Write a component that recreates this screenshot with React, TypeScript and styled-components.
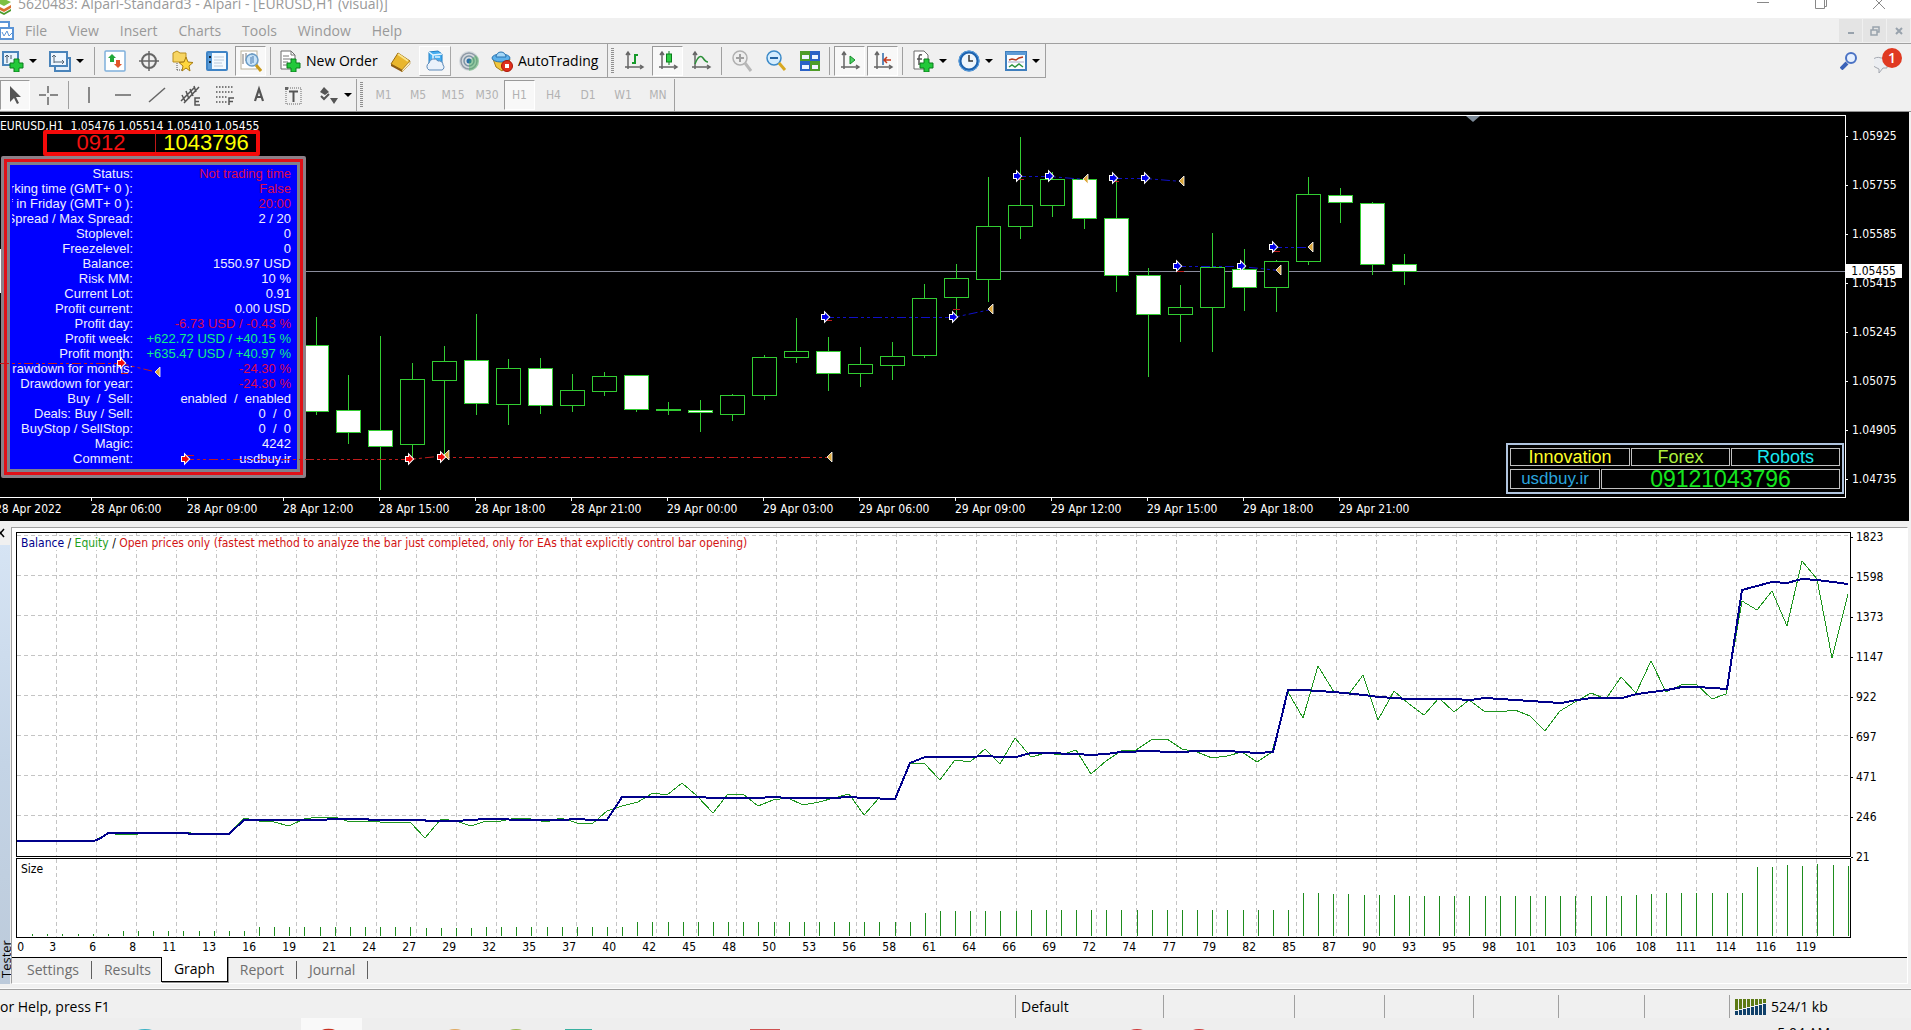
import React from "react";
import styled, { createGlobalStyle, css } from "styled-components";

const UI = `"Open Sans", "Noto Sans", sans-serif`;
const SMALL = `"DejaVu Sans Condensed", "Noto Sans", sans-serif`;
const ARIAL = `"Liberation Sans", Arial, sans-serif`;

const Global = createGlobalStyle`
  *, *::before, *::after { box-sizing: border-box; }
  body { margin: 0; background: #f0f0f0; font: 14px/20px ${UI}; color: #000; overflow: hidden; }
  button { font: inherit; color: inherit; background: none; border: 0; padding: 0; margin: 0; }
  h1, dl, dd, dt, p { margin: 0; font-weight: 400; font-size: inherit; }
  svg { display: block; flex: none; }
`;

const Window = styled.div`
  display: flex;
  flex-direction: column;
  height: 100vh;
  overflow: hidden;
  white-space: nowrap;
`;

/* ---------- title and menu ---------- */

const TitleBar = styled.header`
  display: flex;
  justify-content: space-between;
  flex: none;
  height: 18px;
  background: #fff;
  color: #999;
  overflow: hidden;
`;
const TitleText = styled.div`
  display: flex;
  align-items: center;
  gap: 4px;
  height: 8px;
`;
const WindowButtons = styled.div`
  display: flex;
  gap: 28px;
  padding-right: 17px;
  button { width: 30px; height: 12px; display: flex; justify-content: center; }
`;
const MenuBar = styled.nav`
  display: flex;
  align-items: center;
  gap: 1px;
  flex: none;
  height: 26px;
  border-bottom: 1px solid #a0a0a0;
  color: #999;
`;
const MenuItem = styled.button`
  padding: 0 10px;
  height: 24px;
`;
const MdiButtons = styled.div`
  display: flex;
  gap: 1px;
  margin-left: auto;
  padding-right: 1px;
  button {
    width: 23px; height: 23px; background: #e4e4e4;
    display: flex; align-items: center; justify-content: center;
  }
`;

/* ---------- toolbars ---------- */

const ToolRow = styled.div<{ $last?: boolean }>`
  display: flex;
  flex: none;
  height: 34px;
  ${(p) => p.$last && css`padding-top: 1px; border-bottom: 1px solid #909090;`}
`;
const ToolGroup = styled.div<{ $line?: boolean }>`
  display: flex;
  align-items: center;
  gap: 2px;
  border-right: 1px solid #a0a0a0;
  ${(p) => p.$line && css`border-bottom: 1px solid #a0a0a0;`}
`;
const ToolButton = styled.button<{ $w: number; $on?: boolean; $raised?: boolean; $start?: number }>`
  display: flex;
  align-items: center;
  justify-content: ${(p) => (p.$start === undefined ? "center" : "flex-start")};
  padding-left: ${(p) => p.$start || 0}px;
  gap: 5px;
  width: ${(p) => p.$w}px;
  height: 30px;
  ${(p) => p.$on && css`
    background: #f8f8f8;
    border: 1px solid #fff;
    border-top-color: #9a9a9a;
    border-left-color: #9a9a9a;
  `}
  ${(p) => p.$raised && css`
    background: #f6f6f6;
    border: 1px solid #fff;
    border-bottom-color: #a8a8a8;
    border-right-color: #a8a8a8;
  `}
`;
const Separator = styled.span`
  width: 1px;
  height: 28px;
  margin: 0 2px;
  background: #a0a0a0;
`;
const Grip = styled.span`
  width: 3px;
  height: 26px;
  margin: 0 2px 0 3px;
  background: repeating-linear-gradient(#909090 0 1px, #f0f0f0 1px 2px);
`;
const Period = styled(ToolButton)`
  font: 12px/16px ${SMALL};
  color: #b2b2b2;
`;
const Caret = styled.span`
  border: 4px solid transparent;
  border-top-color: #000;
  border-bottom: 0;
`;
const Notices = styled.div`
  display: flex;
  align-items: center;
  gap: 16px;
  margin-left: auto;
  padding-right: 9px;
  button { height: 30px; }
`;

/* ---------- price chart ---------- */

const ChartArea = styled.main`
  display: grid;
  grid-template-columns: 1fr 63px;
  grid-template-rows: 383px 23px;
  flex: none;
  position: relative;
  padding-top: 3px;
  margin-right: 2px;
  background: #000;
  color: #fff;
  font: 12px/18px ${SMALL};
  overflow: hidden;
`;
const Plot = styled.section`
  position: relative;
  border: 1px solid #fff;
  border-left: 0;
`;
const Layer = styled.svg`
  position: absolute;
  inset: 0;
  width: 100%;
  height: 100%;
  pointer-events: none;
`;
const Quote = styled.p`
  position: relative;
  padding-top: 1px;
  white-space: pre;
`;
const PriceScale = styled.aside`
  display: flex;
  flex-direction: column;
  gap: 31px;
  padding-top: 12px;
  span { display: flex; align-items: center; gap: 4px; }
  span::before { content: ""; width: 2px; height: 1px; background: #fff; }
`;
const CurrentPrice = styled.output`
  position: absolute;
  top: 152px;
  right: 7px;
  padding: 0 6px;
  line-height: 14px;
  background: #fff;
  color: #000;
`;
const TimeScale = styled.div`
  display: flex;
  margin-left: -5px;
  line-height: 16px;
  span { flex: none; width: 96px; }
  span::before { content: ""; display: block; width: 1px; height: 3px; background: #fff; }
`;
const PhoneBox = styled.div`
  position: absolute;
  left: 43px;
  top: 14px;
  display: flex;
  width: 217px;
  height: 26px;
  border: 4px solid #f40a0a;
  border-radius: 2px;
  font: 22px/18px ${ARIAL};
  text-align: center;
  color: #ffff00;
  span { flex: 1; }
  span:first-child { flex: none; width: 109px; color: #f01010; border-right: 1px solid #c01818; }
`;
const InfoFrame = styled.div`
  position: absolute;
  left: 1px;
  top: 40px;
  width: 305px;
  border: 3px solid #8c8088;
  border-radius: 2px;
`;
const InfoRing = styled.div`
  border: 3px solid #e01018;
`;
const InfoList = styled.dl`
  display: grid;
  grid-template-columns: 121px 1fr;
  padding: 1px 6px 3px 2px;
  border: 3px solid #80808c;
  background: #0000ff;
  color: #f0f0ff;
  font: 13px/15px ${ARIAL};
  white-space: pre;
`;
const InfoLabel = styled.dt`
  display: flex;
  justify-content: flex-end;
  overflow: hidden;
`;
const InfoValue = styled.dd<{ $c?: string }>`
  text-align: right;
  color: ${(p) => p.$c || "inherit"};
`;
const AdBox = styled.div`
  position: absolute;
  right: 1px;
  bottom: 3px;
  display: grid;
  gap: 3px;
  width: 338px;
  padding: 3px 2px;
  border: 2px solid #b0c4de;
  background: #000;
  font: 18px/16px ${ARIAL};
  text-align: center;
  div { display: flex; gap: 1px; }
`;
const AdCell = styled.span<{ $w?: number; $c: string; $size?: number; $h?: number }>`
  ${(p) => (p.$w ? css`flex: none; width: ${p.$w}px;` : css`flex: 1;`)}
  border: 1px solid #c0c0c0;
  color: ${(p) => p.$c};
  font-size: ${(p) => p.$size || 18}px;
  line-height: ${(p) => p.$h || 16}px;
`;

/* ---------- strategy tester ---------- */

const Tester = styled.section`
  display: flex;
  flex: none;
  height: 468px;
  border-bottom: 1px solid #fbfbfb;
`;
const Side = styled.div`
  display: flex;
  flex-direction: column;
  width: 11px;
  padding-bottom: 4px;
  overflow: hidden;
  button { height: 24px; text-align: left; display: flex; align-items: center; }
`;
const SideTitle = styled.h2`
  margin: 0;
  flex: 1;
  width: 10px;
  display: flex;
  align-items: center;
  padding: 6px 1px 0 0;
  background: linear-gradient(#bccada, #c4d4e6 50%, #d6e4f4);
  font: 13px/12px ${UI};
  writing-mode: vertical-rl;
  transform: rotate(180deg);
`;
const TesterBody = styled.div`
  display: flex;
  flex-direction: column;
  flex: 1;
  min-width: 0;
  margin: 6px 3px 4px 0;
  border: 1px solid #fff;
  border-top-color: #a0a0a0;
  border-left-color: #a0a0a0;
`;
const Graph = styled.div`
  display: grid;
  grid-template-columns: 1fr 56px;
  grid-template-rows: 325px 80px 19px;
  row-gap: 1px;
  padding: 4px 0 0 4px;
  height: 429px;
  flex: none;
  background: #fff;
  font: 12px/16px ${SMALL};
`;
const Frame = styled.div`
  position: relative;
  border: 1px solid #000;
`;
const Legend = styled.p`
  position: relative;
  padding: 2px 4px;
  color: #000;
  span { background: #fff; }
`;
const Tint = styled.span<{ $c: string }>`
  color: ${(p) => p.$c};
`;
const ValueScale = styled.div`
  display: flex;
  flex-direction: column;
  gap: 24px;
  margin: -3px 0 -5px;
  span { display: flex; align-items: center; gap: 3px; }
  span::before { content: ""; width: 2px; height: 1px; background: #000; }
`;
const TradeScale = styled.div`
  display: flex;
  text-align: right;
  line-height: 17px;
  span { flex: none; width: 40px; }
  span:first-child { width: 8px; }
  span:nth-child(2) { width: 32px; }
`;
const Tabs = styled.div`
  display: flex;
  align-items: center;
  height: 25px;
  border-top: 1px solid #000;
  padding-left: 3px;
  color: #6e6e6e;
`;
const Tab = styled.button<{ $active?: boolean; $plain?: boolean }>`
  padding: 0 12px;
  height: 18px;
  line-height: 18px;
  border-right: 1px solid #606060;
  ${(p) => p.$plain && css`padding-right: 10px; border-right: 0;`}
  ${(p) => p.$active && css`
    height: 25px;
    margin-top: -1px;
    align-self: flex-start;
    color: #000;
    background: #fff;
    border: solid #000;
    border-width: 0 1px 1px;
    box-shadow: 1px 1px 0 #909090;
  `}
`;

/* ---------- status bar ---------- */

const StatusBar = styled.footer`
  display: flex;
  flex: none;
  height: 29px;
  padding-top: 5px;
  border-top: 1px solid #a0a0a0;
`;
const StatusCell = styled.div<{ $w?: number }>`
  display: flex;
  align-items: center;
  gap: 5px;
  ${(p) => (p.$w ? css`flex: none; width: ${p.$w}px; border-left: 1px solid #a0a0a0; padding-left: 5px;` : css`flex: 1;`)}
`;
const Taskbar = styled.div`
  display: flex;
  justify-content: space-between;
  flex: none;
  height: 12px;
  background: #eeeeee;
  overflow: hidden;
  time { padding: 5px 81px 0 0; line-height: 20px; }
`;

/* ---------- icons ---------- */

const plus = (
  <path d="M12 9h5v4h4v5h-4v4h-5v-4H8v-5h4z" fill="#22c93a" stroke="#0b7d1c" />
);
const axes = (
  <path d="M5 3v16M2 17h18M3 5l2-3 2 3M17 15l3 2-3 2" fill="none" stroke="#666" strokeWidth="1.5" />
);

const glyphs: Record<string, React.ReactNode> = {
  newChart: <><rect x="1" y="2" width="15" height="13" fill="#e8f3fd" stroke="#4a84ba" strokeWidth="2" /><path d="M5 5v8M3 7l2-2 2 2M9 5v4" stroke="#456" fill="none" />{plus}</>,
  profiles: <><rect x="6" y="8" width="15" height="13" fill="#e6f0fa" stroke="#4a84ba" strokeWidth="2" /><rect x="1" y="2" width="17" height="14" fill="#eef6fe" stroke="#4a84ba" strokeWidth="2" /><path d="M5 5v8M5 12h10M3 7l2-2 2 2M13 10l2 2-2 2" stroke="#567" fill="none" /></>,
  market: <><rect x="1" y="1" width="20" height="20" rx="1" fill="#fff" stroke="#7fb0dc" strokeWidth="1.500" /><path d="M8 4l4 4h-2v4H6V8H4z" fill="#21a83a" /><path d="M14 18l4-4h-2v-4h-4v4h-2z" fill="#e2562b" /></>,
  target: <g fill="none" stroke="#666" strokeWidth="2"><circle cx="11" cy="11" r="7" /><path d="M11 1v20M1 11h20" strokeWidth="1.5" /></g>,
  favorites: <><path d="M1 3l4-2 3 2h6v9H1z" fill="#f7d562" stroke="#b98e1e" /><path d="M5 13v8M5 20h5" stroke="#555" strokeDasharray="1 1" /><path d="M14 7l2 5 5 .500-4 3.500 1 5-4-3-4 3 1-5-4-3.500 5-.5z" fill="#ffd73d" stroke="#a87d12" /></>,
  navigator: <><rect x="1" y="2" width="20" height="18" rx="1" fill="#f4faff" stroke="#3f84c6" strokeWidth="2" /><path d="M2 3h4v16H2z" fill="#5a9cd8" /><path d="M8 7h10M8 10h10M8 13h8M8 16h9" stroke="#bccada" /><path d="M3 7h2M3 12h2" stroke="#123" strokeWidth="2" /></>,
  tester: <><rect x="1" y="1" width="16" height="18" fill="#fff" stroke="#b9b29c" /><path d="M3 4v10M6 3v8M12 3v6" stroke="#777" /><circle cx="12" cy="10" r="6" fill="#bfe0f8dd" stroke="#6b9cc6" strokeWidth="1.500" /><path d="M11 7v7M13 6v7" stroke="#4a7ab0" /><path d="M16 15l5 6" stroke="#c99a1a" strokeWidth="3" /></>,
  order: <><path d="M2 1h10l4 4v14H2z" fill="#fff" stroke="#6b6b6b" /><path d="M12 1v4h4M4 6h6M4 9h9M4 12h5M4 15h4" stroke="#777" fill="none" />{plus}</>,
  book: <><path d="M1 14L8 3l12 8-8 9z" fill="#e9b62c" stroke="#9a6c0d" /><path d="M1 14l11 6v2L1 16z" fill="#8c5a12" /><path d="M12 20l8-9v3l-8 8z" fill="#fff3c6" stroke="#a87817" strokeWidth=".5" /><path d="M8 4l10 7" stroke="#fbe48a" strokeWidth="2" /></>,
  cloud: <><path d="M5 2l9-1 4 3v9H5z" fill="#46aef0" stroke="#1f7fc6" /><path d="M5 2l4 3v8M9 5l9-1M11 7h5" stroke="#e2f4ff" fill="none" strokeWidth="1.500" /><path d="M5 20a4 4 0 010-7 5 5 0 019-2 4 4 0 015 4 3 3 0 01-1 5z" fill="#eaf2fb" stroke="#5a88b8" /></>,
  signal: <><circle cx="11" cy="11" r="10" fill="#d6dade" /><circle cx="11" cy="11" r="8" fill="none" stroke="#8f9aa6" strokeWidth="1.500" /><circle cx="11" cy="11" r="5" fill="none" stroke="#7b93a4" strokeWidth="1.500" /><circle cx="11" cy="11" r="2.500" fill="#2a6fa8" /><path d="M11 11v10a10 10 0 0010-10 8 8 0 00-3-6z" fill="#49b65a" opacity=".45" /></>,
  auto: <><path d="M2 9h17l-3 8-5 4-6-4z" fill="#f1c63c" stroke="#a87c14" /><ellipse cx="10" cy="8" rx="9" ry="4" fill="#5db1ea" stroke="#2772b0" /><path d="M5 7a5 5 0 0110 0z" fill="#a5d8f8" stroke="#2772b0" /><circle cx="16" cy="16" r="5.500" fill="#e0301e" stroke="#a81808" /><rect x="14" y="14" width="4" height="4" fill="#fff" /></>,
  bars: <>{axes}<path d="M12 4v10M12 5h3M9 13h3" stroke="#159a2a" strokeWidth="2" /></>,
  candles: <>{axes}<path d="M12 1v14" stroke="#0a7d1c" /><rect x="9.500" y="4" width="5" height="8" fill="#2fcf45" stroke="#0a7d1c" /></>,
  line: <>{axes}<path d="M5 14c3-8 6-9 8-6s3 4 5 4" fill="none" stroke="#2b9038" strokeWidth="1.500" /></>,
  zoomIn: <><circle cx="9" cy="8" r="7" fill="#eee" stroke="#b0b0b0" strokeWidth="1.500" /><path d="M5 8h8M9 4v8" stroke="#a0a0a0" strokeWidth="2" /><path d="M14 13l6 8" stroke="#b8b8b8" strokeWidth="3" /></>,
  zoomOut: <><circle cx="9" cy="8" r="7" fill="#d4edff" stroke="#3c8ac8" strokeWidth="1.500" /><path d="M5 8h8" stroke="#2465a4" strokeWidth="2" /><path d="M14 13l6 7" stroke="#d8a821" strokeWidth="3" /></>,
  tile: <><path d="M1 1h10v10H1z" fill="#4f9c28" /><path d="M11 1h10v10H11z" fill="#2b62c6" /><path d="M1 11h10v10H1z" fill="#2b62c6" /><path d="M11 11h10v10H11z" fill="#4f9c28" /><path d="M3 5h7v4H3zM13 5h6v4h-6zM3 15h7v4H3zM13 15h6v4h-6z" fill="#eef6ff" /></>,
  scroll: <>{axes}<path d="M11 6l5 4-5 4z" fill="#4fd265" stroke="#148a28" /></>,
  shift: <>{axes}<path d="M11 3v12" stroke="#2b68a8" strokeWidth="1.500" /><path d="M19 10h-7M15 7l-3 3 3 3" stroke="#c23a1e" fill="none" strokeWidth="1.500" /></>,
  indicators: <><path d="M2 1h10l4 4v14H2z" fill="#fff" stroke="#6b6b6b" /><path d="M10 5c-3-1-3 1-3 4v6M5 9h5" fill="none" stroke="#555" strokeWidth="1.500" />{plus}</>,
  clock: <><circle cx="11" cy="11" r="9" fill="#eef5fb" stroke="#1d62ae" strokeWidth="3" /><circle cx="11" cy="11" r="10" fill="none" stroke="#5aa0e0" /><path d="M11 5v6h4" fill="none" stroke="#333" strokeWidth="1.500" /></>,
  template: <><rect x="1" y="2" width="20" height="18" fill="#fbfdff" stroke="#3f7fbe" strokeWidth="2" /><path d="M1 2h20v3H1z" fill="#5d9bd6" /><path d="M4 10l3-1 4 1 3-2 4-1" stroke="#b53a1d" fill="none" strokeWidth="1.500" /><path d="M4 17l3-2 3 2 4-3 4 3" stroke="#2f9440" fill="none" strokeWidth="1.500" /><path d="M3 12h16" stroke="#aac" /></>,
  cursor: <path d="M6 2v16l4-4 3 6 2-1-3-6h5z" fill="#555" />,
  cross: <path d="M11 2v7M11 13v8M2 11h7M13 11h8" stroke="#666" strokeWidth="1.500" />,
  vline: <path d="M11 3v16" stroke="#666" strokeWidth="1.500" />,
  hline: <path d="M3 11h16" stroke="#666" strokeWidth="1.500" />,
  trend: <path d="M3 18L19 4" stroke="#666" strokeWidth="1.500" />,
  channel: <><path d="M1 17L15 3M4 19L19 3M2 11l3 6M6 7l3 8M10 5l3 7M14 2l2 6" stroke="#555" strokeWidth="1.500" fill="none" /><path d="M20 14h-5v7h5M15 17.500h4" stroke="#555" strokeWidth="1.500" fill="none" /></>,
  fibo: <><path d="M2 3h18M2 8h18M2 13h12M2 18h12" stroke="#555" strokeWidth="1.500" strokeDasharray="1.500 1.500" /><path d="M15 21v-7h5M15 17.500h4" stroke="#555" strokeWidth="1.500" fill="none" /></>,
  text: <path d="M7 17l4-12 4 12M8.500 13h5" stroke="#555" strokeWidth="2.200" fill="none" />,
  label: <><rect x="4" y="4" width="15" height="16" fill="none" stroke="#666" strokeDasharray="1 1" /><path d="M3 3h3v3H3z" fill="#666" /><path d="M7 7.500h9M11.500 7v11" stroke="#555" strokeWidth="2" /></>,
  shapes: <><path d="M7 3l5 5-4 3-5-3zM13 14h8l-4 6z" fill="#555" /><path d="M4 12l3 3 5-5" stroke="#555" strokeWidth="2" fill="none" /></>,
};

const Icon = ({ name }: { name: string }) => (
  <svg width="22" height="22" viewBox="0 0 22 22" aria-hidden="true">{glyphs[name]}</svg>
);

type Tool = { icon?: string; w?: number; on?: boolean; raised?: boolean; start?: number; caret?: boolean; text?: string };
const sep: Tool = {};

const fileTools: Tool[] = [
  { icon: "newChart", w: 46, start: 2, caret: true },
  { icon: "profiles", w: 42, start: 1, caret: true }, sep,
  { icon: "market", w: 32 }, { icon: "target", w: 32 }, { icon: "favorites", w: 32 }, { icon: "navigator", w: 32 },
  { icon: "tester", w: 31, on: true }, sep,
  { icon: "order", w: 108, start: 4, text: "New Order" },
  { icon: "book", w: 32 }, { icon: "cloud", w: 32, raised: true }, { icon: "signal", w: 32 },
  { icon: "auto", w: 120, start: 4, text: "AutoTrading" },
];
const chartTools: Tool[] = [
  { icon: "bars", w: 32 }, { icon: "candles", w: 31, on: true }, { icon: "line", w: 32 }, sep,
  { icon: "zoomIn", w: 32 }, { icon: "zoomOut", w: 32 }, { icon: "tile", w: 31 }, sep,
  { icon: "scroll", w: 31, on: true }, { icon: "shift", w: 31, on: true }, sep,
  { icon: "indicators", w: 44, start: 5, caret: true }, { icon: "clock", w: 45, start: 5, caret: true },
  { icon: "template", w: 45, start: 5, caret: true },
];
const drawTools: Tool[] = [
  { icon: "cursor", w: 30, on: true }, { icon: "cross", w: 32 }, sep,
  { icon: "vline", w: 32 }, { icon: "hline", w: 32 }, { icon: "trend", w: 32 }, { icon: "channel", w: 32 },
  { icon: "fibo", w: 32 }, { icon: "text", w: 32 }, { icon: "label", w: 32 },
  { icon: "shapes", w: 45, start: 6, caret: true },
];
const periods: [string, number][] = [
  ["M1", 33], ["M5", 32], ["M15", 34], ["M30", 30], ["H1", 31], ["H4", 33], ["D1", 32], ["W1", 34], ["MN", 32],
];

const Tools = ({ items }: { items: Tool[] }) => (
  <>
    {items.map((t, i) =>
      t.icon ? (
        <ToolButton key={i} $w={t.w!} $on={t.on} $raised={t.raised} $start={t.start} aria-label={t.text || t.icon}>
          <Icon name={t.icon} />
          {t.text}
          {t.caret && <Caret />}
        </ToolButton>
      ) : (
        <Separator key={i} />
      )
    )}
  </>
);

/* ---------- data ---------- */

// high, body top, body bottom, low, filled
const candles: [number, number, number, number, number][] = [
  [317, 345, 411, 414, 1], [375, 410, 432, 443, 1], [336, 430, 446, 489, 1], [363, 379, 444, 457, 0],
  [346, 361, 380, 454, 0], [314, 360, 403, 414, 1], [359, 368, 404, 424, 0], [358, 368, 405, 413, 1],
  [374, 390, 405, 411, 0], [372, 376, 391, 395, 0], [375, 375, 409, 411, 1], [402, 409, 410, 414, 0],
  [400, 410, 412, 431, 1], [394, 395, 414, 420, 0], [355, 357, 395, 399, 0], [318, 351, 357, 362, 0],
  [337, 351, 373, 390, 1], [347, 364, 373, 386, 0], [342, 356, 365, 379, 0], [284, 298, 355, 357, 0],
  [264, 278, 297, 315, 0], [177, 226, 279, 301, 0], [137, 205, 226, 238, 0], [172, 179, 205, 216, 0],
  [179, 179, 218, 228, 1], [179, 218, 275, 291, 1], [268, 275, 314, 376, 1], [285, 307, 314, 341, 0],
  [233, 267, 307, 351, 0], [249, 269, 287, 310, 1], [260, 261, 287, 311, 0], [177, 194, 261, 264, 0],
  [188, 195, 202, 222, 1], [202, 203, 264, 274, 1], [254, 264, 271, 284, 1],
];
const buys = [[826, 317], [954, 317], [1018, 176], [1050, 176], [1114, 178], [1146, 178], [1178, 266], [1242, 266], [1274, 247]];
const sells = [[122, 363], [186, 459], [410, 459], [442, 457]];
const closes = [[991, 309], [1086, 179], [1182, 181], [1279, 270], [1311, 247], [158, 372], [447, 455], [830, 457]];
const stops = [[828, 320], [956, 309], [1020, 179], [1115, 181], [1180, 271], [1276, 251], [190, 455], [124, 373]];

const prices = ["1.05925", "1.05755", "1.05585", "1.05415", "1.05245", "1.05075", "1.04905", "1.04735"];
const times = [
  "28 Apr 2022", "28 Apr 06:00", "28 Apr 09:00", "28 Apr 12:00", "28 Apr 15:00", "28 Apr 18:00", "28 Apr 21:00",
  "29 Apr 00:00", "29 Apr 03:00", "29 Apr 06:00", "29 Apr 09:00", "29 Apr 12:00", "29 Apr 15:00", "29 Apr 18:00", "29 Apr 21:00",
];
const RED = "#dc0a50";
const GREEN = "#14ee86";
const info: [string, string, string?][] = [
  ["Status:", "Not trading time", RED], ["rking time (GMT+ 0 ):", "False", RED], ["f in Friday (GMT+ 0 ):", "20:00", RED],
  ["Spread / Max Spread:", "2 / 20"], ["Stoplevel:", "0"], ["Freezelevel:", "0"], ["Balance:", "1550.97 USD"],
  ["Risk MM:", "10 %"], ["Current Lot:", "0.91"], ["Profit current:", "0.00 USD"],
  ["Profit day:", "-6.73 USD / -0.43 %", RED], ["Profit week:", "+622.72 USD / +40.15 %", GREEN],
  ["Profit month:", "+635.47 USD / +40.97 %", GREEN], ["Drawdown for months:", "-24.30 %", RED],
  ["Drawdown for year:", "-24.30 %", RED], ["Buy  /  Sell:", "enabled  /  enabled"], ["Deals: Buy / Sell:", "0  /  0"],
  ["BuyStop / SellStop:", "0  /  0"], ["Magic:", "4242"], ["Comment:", "usdbuy.ir"],
];

const balance =
  "17,841 94,841 101,838 108,833 185,833 192,834 229,834 244,820 320,820 335,819 365,819 372,820 425,820 426,821 456,821 471,820 486,819 501,819 516,820 562,820 577,819 592,820 607,820 622,797 698,797 713,798 758,798 773,797 788,798 834,798 849,797 864,798 895,799 910,763 925,757 970,757 985,756 1000,757 1016,757 1031,753 1046,753 1076,754 1091,755 1106,754 1121,752 1152,751 1167,752 1182,752 1197,751 1227,751 1257,753 1273,752 1288,690 1303,690 1334,692 1364,695 1379,697 1409,699 1454,699 1470,700 1485,698 1515,700 1545,702 1561,703 1577,700 1592,698 1622,698 1637,694 1652,692 1667,690 1682,687 1697,687 1712,688 1727,689 1742,590 1757,586 1772,582 1787,583 1802,579 1817,580 1833,582 1848,584";
const equity =
  "17,841 94,841 108,833 123,835 138,834 153,832 168,834 183,832 199,834 214,835 229,834 244,818 259,821 274,822 289,826 304,819 319,817 335,817 350,822 365,821 380,822 410,822 425,838 441,819 456,821 471,826 486,821 501,821 516,818 531,819 546,822 561,818 577,823 592,824 607,811 622,806 638,802 653,793 667,795 682,783 697,796 713,813 728,794 743,794 758,806 773,800 788,798 803,805 819,802 834,798 849,794 864,815 879,798 895,799 910,763 924,763 940,780 955,760 970,762 985,749 1000,764 1015,738 1031,757 1046,753 1061,755 1076,750 1091,774 1106,761 1121,751 1136,750 1151,740 1167,739 1182,749 1197,752 1212,758 1227,756 1242,752 1257,762 1272,752 1288,692 1303,718 1318,666 1334,692 1349,694 1363,675 1378,720 1394,691 1409,704 1424,715 1439,698 1454,712 1469,700 1484,711 1499,712 1515,710 1530,716 1545,731 1560,711 1575,702 1591,693 1606,699 1621,677 1636,693 1651,661 1666,692 1681,685 1696,684 1712,699 1726,694 1742,601 1757,610 1772,591 1787,626 1802,561 1817,579 1832,658 1848,594";

// tops of the lot-size bars, as [last trade number, y]
const sizes: [number, number][] = [
  [6, 934], [15, 931], [26, 927], [30, 928], [40, 927], [59, 922], [60, 913], [66, 911], [72, 910], [84, 910],
  [86, 893], [88, 894], [91, 895], [106, 896], [107, 895], [108, 894], [114, 893], [116, 867], [117, 865], [118, 866],
  [119, 864], [120, 865], [121, 866],
];
const values = [1823, 1598, 1373, 1147, 922, 697, 471, 246, 21];
const trades = [
  0, 3, 6, 8, 11, 13, 16, 19, 21, 24, 27, 29, 32, 35, 37, 40, 42, 45, 48, 50, 53, 56, 58, 61, 64, 66, 69, 72, 74, 77, 79,
  82, 85, 87, 90, 93, 95, 98, 101, 103, 106, 108, 111, 114, 116, 119,
];
const gridX = Array.from({ length: 45 }, (_, i) => 56.5 + 40 * i);

const Verticals = ({ y1, y2 }: { y1: number; y2: number }) => (
  <g stroke="#c4c4c4" strokeDasharray="4 3">
    {gridX.map((x) => <line key={x} x1={x} x2={x} y1={y1} y2={y2} />)}
  </g>
);

const Arrow = ({ at, color }: { at: number[]; color: string }) => (
  <path transform={`translate(${at[0]} ${at[1]})`} d="M-4 -2H-1V-4L3 0L-1 4V2H-4Z" fill={color} stroke="#fff" strokeWidth="2" paintOrder="stroke" />
);

/* ---------- sections ---------- */

const PriceChart = () => (
  <ChartArea>
    <Plot>
      <Layer viewBox="0 116 1845 381" preserveAspectRatio="none">
        <rect x="0" y="271" width="1845" height="1" fill="#8a8c9c" />
        <rect x="0" y="249" width="2" height="44" fill="#fff" />
        <path d="M1466 116h14l-7 6z" fill="#7c8a98" />
        {candles.map(([hi, top, bottom, lo, filled], i) => (
          <g key={i} stroke="#32cd32">
            <line x1={316.5 + 32 * i} x2={316.5 + 32 * i} y1={hi} y2={lo + 1} />
            <rect x={304.5 + 32 * i} y={top + 0.5} width="24" height={bottom - top} fill={filled ? "#fff" : "#000"} />
          </g>
        ))}
      </Layer>
      <Quote>EURUSD,H1  1.05476 1.05514 1.05410 1.05455</Quote>
      <PhoneBox><span>0912</span><span>1043796</span></PhoneBox>
      <InfoFrame>
        <InfoRing>
          <InfoList>
            {info.map(([label, value, color]) => (
              <React.Fragment key={label}>
                <InfoLabel>{label}</InfoLabel>
                <InfoValue $c={color}>{value}</InfoValue>
              </React.Fragment>
            ))}
          </InfoList>
        </InfoRing>
      </InfoFrame>
      <Layer viewBox="0 116 1845 381" preserveAspectRatio="none">
        <g fill="none" strokeDasharray="9 3 3 3 3 3">
          <path d="M825 317.500H953L991 309.500M1017 176.500H1049L1086 179.500M1113 178.500H1145L1182 181.500M1177 266.500H1241L1279 270.500M1273 247.500H1311" stroke="#1010c8" />
          <path d="M0 363.500H121L158 372.500M185 459.500H409L447 455.500M441 457.500H830" stroke="#c01c1c" />
        </g>
        {stops.map(([x, y]) => <rect key={x} x={x - 3} y={y} width="7" height="1" fill="#c01c1c" />)}
        {closes.map(([x, y]) => (
          <path key={x} transform={`translate(${x} ${y})`} d="M-3 0L2 -5V5Z" fill="#dca83c" stroke="#fff" strokeWidth=".8" />
        ))}
        {buys.map((p) => <Arrow key={p[0]} at={p} color="#0000e8" />)}
        {sells.map((p) => <Arrow key={p[0]} at={p} color="#f00808" />)}
      </Layer>
      <AdBox>
        <div>
          <AdCell $w={120} $c="#ffff28">Innovation</AdCell>
          <AdCell $w={99} $c="#adf03c">Forex</AdCell>
          <AdCell $c="#18e8f0">Robots</AdCell>
        </div>
        <div>
          <AdCell $w={90} $c="#2aa4dc" $size={17} $h={18}>usdbuy.ir</AdCell>
          <AdCell $c="#14e61e" $size={23} $h={18}>09121043796</AdCell>
        </div>
      </AdBox>
    </Plot>
    <PriceScale>{prices.map((p) => <span key={p}>{p}</span>)}</PriceScale>
    <TimeScale>{times.map((t) => <span key={t}>{t}</span>)}</TimeScale>
    <CurrentPrice>1.05455</CurrentPrice>
  </ChartArea>
);

const StrategyTester = () => (
  <Tester>
    <Side>
      <button aria-label="Close">
        <svg width="6" height="10" viewBox="0 0 6 10"><path d="M-3 1l7 8M4 1l-7 8" stroke="#000" strokeWidth="1.500" /></svg>
      </button>
      <SideTitle>Tester</SideTitle>
    </Side>
    <TesterBody>
      <Graph>
        <Frame>
          <Layer viewBox="17 533 1833 323" preserveAspectRatio="none">
            <Verticals y1={533} y2={856} />
            <g stroke="#c4c4c4" strokeDasharray="4 3">
              {[0, 1, 2, 3, 4, 5, 6, 7].map((i) => <line key={i} x1="17" x2="1850" y1={535.5 + 40 * i} y2={535.5 + 40 * i} />)}
            </g>
            <g fill="none" shapeRendering="crispEdges">
              <polyline points={equity} stroke="#1e961e" />
              <polyline points={balance} stroke="#00008b" strokeWidth="2" />
            </g>
          </Layer>
          <Legend>
            <span>
              <Tint $c="#00008b">Balance</Tint> / <Tint $c="#1ea01e">Equity</Tint> /{" "}
              <Tint $c="#d21414">Open prices only (fastest method to analyze the bar just completed, only for EAs that explicitly control bar opening)</Tint>
            </span>
          </Legend>
        </Frame>
        <ValueScale>{values.map((v) => <span key={v}>{v}</span>)}</ValueScale>
        <Frame>
          <Layer viewBox="17 859 1833 78" preserveAspectRatio="none">
            <Verticals y1={859} y2={937} />
            {sizes.flatMap(([last, y], i) => {
              const first = i ? sizes[i - 1][0] + 1 : 1;
              return Array.from({ length: last - first + 1 }, (_, k) => (
                <rect key={first + k} x={Math.round(17 + 15.13 * (first + k))} y={y} width="1" height={936 - y} fill="#1e8c1e" />
              ));
            })}
          </Layer>
          <Legend>Size</Legend>
        </Frame>
        <div />
        <TradeScale>{trades.map((t) => <span key={t}>{t}</span>)}</TradeScale>
      </Graph>
      <Tabs role="tablist">
        <Tab role="tab">Settings</Tab>
        <Tab role="tab" $plain>Results</Tab>
        <Tab role="tab" aria-selected $active>Graph</Tab>
        <Tab role="tab">Report</Tab>
        <Tab role="tab">Journal</Tab>
      </Tabs>
    </TesterBody>
  </Tester>
);

export default function App() {
  return (
    <Window>
      <Global />
      <TitleBar>
        <TitleText>
          <svg width="14" height="24" viewBox="0 0 14 24">
            <path d="M-4 10l6-4 9 4-7 4z" fill="#7cc043" /><path d="M-4 13l8 4 7-4v3l-7 4-8-4z" fill="#d9702c" /><path d="M-4 17l8 4 7-4v2l-7 4-8-4z" fill="#4a9a2c" />
          </svg>
          <h1>5620483: Alpari-Standard3 - Alpari - [EURUSD,H1 (visual)]</h1>
        </TitleText>
        <WindowButtons>
          <button aria-label="Minimize"><svg width="12" height="12"><path d="M0 2.500h12" stroke="#888" /></svg></button>
          <button aria-label="Restore"><svg width="12" height="12"><path d="M.5-2v10.500h9V-2M11.500-2v8.500H10" fill="none" stroke="#888" /></svg></button>
          <button aria-label="Close window"><svg width="12" height="12"><path d="M0-3l12 12M12-3L0 9" stroke="#888" /></svg></button>
        </WindowButtons>
      </TitleBar>
      <MenuBar>
        <svg width="14" height="20" viewBox="0 0 14 20">
          <rect x="-4" y="1" width="13" height="10" fill="#fff" stroke="#5b94d6" strokeWidth="2" />
          <rect x="0" y="7" width="13" height="11" fill="#fff" stroke="#5b94d6" strokeWidth="2" />
          <path d="M2 11l2 4 3-5 2 5 3-3" fill="none" stroke="#5b94d6" />
        </svg>
        {["File", "View", "Insert", "Charts", "Tools", "Window", "Help"].map((m) => <MenuItem key={m}>{m}</MenuItem>)}
        <MdiButtons>
          <button aria-label="Minimize chart"><svg width="8" height="8"><path d="M1 6h6" stroke="#98a2ac" strokeWidth="2" /></svg></button>
          <button aria-label="Restore chart"><svg width="10" height="10"><path d="M1 4h6v5H1zM3 4V1h6v5H7" fill="none" stroke="#98a2ac" strokeWidth="1.500" /></svg></button>
          <button aria-label="Close chart"><svg width="8" height="8"><path d="M1 1l6 6M7 1L1 7" stroke="#98a2ac" strokeWidth="2" /></svg></button>
        </MdiButtons>
      </MenuBar>
      <ToolRow>
        <ToolGroup $line><Tools items={fileTools} /></ToolGroup>
        <ToolGroup $line><Grip /><Tools items={chartTools} /></ToolGroup>
        <Notices>
          <button aria-label="Search">
            <svg width="18" height="18" viewBox="0 0 18 18"><path d="M1 17l6-6" stroke="#3a62b8" strokeWidth="4" /><circle cx="11" cy="6" r="5" fill="#e6f0ff" stroke="#4a72c4" strokeWidth="2" /></svg>
          </button>
          <button aria-label="Notifications">
            <svg width="28" height="28" viewBox="0 0 28 28">
              <path d="M1 20a6 5 0 016-9h6v10H9l-4 5v-4z" fill="#eceef2" stroke="#a4a8b0" />
              <circle cx="18" cy="11" r="10" fill="#e03a22" />
              <text x="18" y="16" textAnchor="middle" fontSize="14" fontWeight="600" fontFamily="Open Sans" fill="#fff">1</text>
            </svg>
          </button>
        </Notices>
      </ToolRow>
      <ToolRow $last>
        <ToolGroup><Tools items={drawTools} /></ToolGroup>
        <ToolGroup>
          <Grip />
          {periods.map(([p, w]) => <Period key={p} $w={w} $on={p === "H1"}>{p}</Period>)}
        </ToolGroup>
      </ToolRow>
      <PriceChart />
      <StrategyTester />
      <StatusBar>
        <StatusCell>or Help, press F1</StatusCell>
        <StatusCell $w={148}>Default</StatusCell>
        <StatusCell $w={131} />
        <StatusCell $w={90} />
        <StatusCell $w={89} />
        <StatusCell $w={85} />
        <StatusCell $w={86} />
        <StatusCell $w={85} />
        <StatusCell $w={182}>
          <svg width="31" height="16" viewBox="0 0 31 16">
            {[0, 1, 2, 3, 4, 5, 6, 7].map((i) => (
              <g key={i}>
                <rect x={i * 4} y="0" width="3" height={11 - i} fill="#5c7a14" />
                <rect x={i * 4} y={12 - i} width="3" height={4 + i} fill="#10406a" />
              </g>
            ))}
          </svg>
          524/1 kb
        </StatusCell>
      </StatusBar>
      <Taskbar>
        <svg width="1240" height="12">
          <rect x="301" y="0" width="61" height="12" fill="#f9f9f9" />
          <path d="M138 12a9 3 0 0114 0z" fill="#38b0c4" /><path d="M322 12a8 3 0 0113 0z" fill="#c83020" />
          <path d="M449 12a8 3 0 0112 0z" fill="#e0a860" /><path d="M510 12a8 3 0 0112 0z" fill="#9ab850" />
          <path d="M565 11h27v1h-27z" fill="#38b0a0" /><path d="M750 11h30v1h-30z" fill="#d05050" />
          <path d="M1131 12a8 3 0 0112 0zM1193 12a8 3 0 0112 0z" fill="#d03838" />
        </svg>
        <time>5:04 AM</time>
      </Taskbar>
    </Window>
  );
}
